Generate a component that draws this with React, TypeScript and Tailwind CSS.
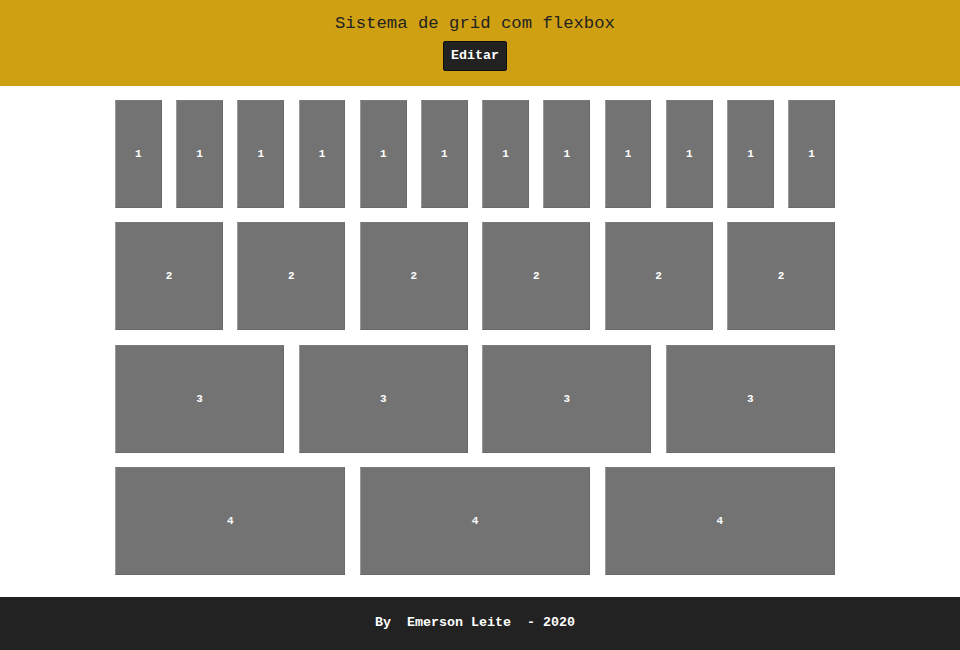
import React from 'react';

const rows = [12, 6, 4, 3];

const Box: React.FC<{ label: number }> = ({ label }) => (
  <div className="flex-1 h-[108px] flex items-center justify-center bg-[#737373] border border-[#6a6a6a] border-l-[#9a9a9a] border-t-[#7a7a7a]">
    <span className="text-[11px] font-bold text-white">{label}</span>
  </div>
);

export default function App() {
  return (
    <div className="min-h-[650px] flex flex-col bg-white font-['Liberation_Mono',_'Courier_New',_monospace]">
      <header className="h-[86px] bg-[#cfa011]">
        <div className="w-[950px] flex flex-col items-center pt-[14px]">
          <h1 className="text-[17.3px] leading-[20px] text-[#222]">Sistema de grid com flexbox</h1>
          <button className="mt-[7px] h-[30px] px-[7px] bg-[#222] text-white text-[13.33px] font-bold rounded-[2px] border border-[#111]">
            Editar
          </button>
        </div>
      </header>

      <main className="w-[950px]">
        <div className="w-[720px] mx-auto pt-[14px] pb-[22px] flex flex-col gap-[14.4px]">
          {rows.map((n, r) => (
            <div key={n} className="flex gap-[14.4px]">
              {Array.from({ length: n }).map((_, i) => (
                <Box key={i} label={r + 1} />
              ))}
            </div>
          ))}
        </div>
      </main>

      <footer className="h-[53px] bg-[#222]">
        <div className="w-[950px] h-full flex items-center justify-center pb-[2px]">
          <p className="text-[13.33px] font-bold text-white whitespace-pre">By  Emerson Leite  - 2020</p>
        </div>
      </footer>
    </div>
  );
}
